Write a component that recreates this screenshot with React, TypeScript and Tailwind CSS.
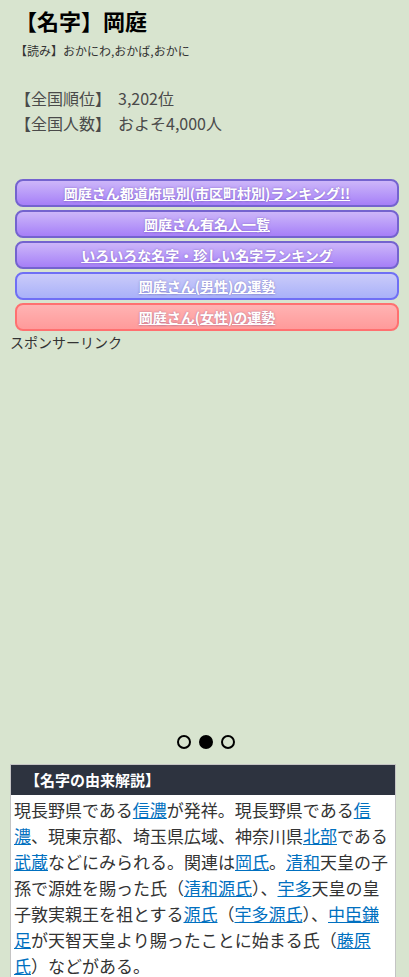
const font = "font-['Noto_Sans_CJK_JP','Noto_Sans',sans-serif]";

type Btn = { label: string; tone: "purple" | "blue" | "red" };

const buttons: Btn[] = [
  { label: "岡庭さん都道府県別(市区町村別)ランキング!!", tone: "purple" },
  { label: "岡庭さん有名人一覧", tone: "purple" },
  { label: "いろいろな名字・珍しい名字ランキング", tone: "purple" },
  { label: "岡庭さん(男性)の運勢", tone: "blue" },
  { label: "岡庭さん(女性)の運勢", tone: "red" },
];

const toneClass = {
  purple: "bg-gradient-to-b from-[#cdb6f9] to-[#a67ff7] border-[#7463cf]",
  blue: "bg-gradient-to-b from-[#cbcbf9] to-[#a9b1f9] border-[#6f6ff5]",
  red: "bg-gradient-to-b from-[#ffb3b3] to-[#ff9a9a] border-[#ff7070]",
};

function L({ children }: { children: string }) {
  return <a href="#" className="text-[#0070c0] underline">{children}</a>;
}

export default function App() {
  return (
    <div className={`min-h-[977px] w-[409px] bg-[#d8e4cf] text-[#333] ${font}`}>
      {/* header */}
      <div className="px-[15px] pt-[6px]">
        <h1 className="text-[22px] font-bold leading-[28px] text-black">【名字】岡庭</h1>
        <p className="mt-[9px] text-[12px] leading-[16px] text-[#333]">【読み】おかにわ,おかば,おかに</p>
        <div className="mt-[27px] text-[16px] leading-[25px] text-[#4a4a4a]">
          <div className="flex">
            <span className="w-[103px]">【全国順位】</span>
            <span>3,202位</span>
          </div>
          <div className="flex">
            <span className="w-[103px]">【全国人数】</span>
            <span>およそ4,000人</span>
          </div>
        </div>
      </div>

      {/* link buttons */}
      <div className="mt-[43px] flex flex-col gap-[3px] pl-[15px] pr-[10px]">
        {buttons.map((b) => (
          <a
            key={b.label}
            href="#"
            className={`flex h-[28px] items-center justify-center rounded-[8px] border-2 text-[14px] font-bold text-white underline [text-shadow:0_0_2px_rgba(60,40,120,0.45)] ${toneClass[b.tone]}`}
          >
            {b.label}
          </a>
        ))}
      </div>
      <p className="pl-[10px] pt-[1px] text-[14px] leading-[20px] text-[#333]">スポンサーリンク</p>

      {/* ad space */}
      <div className="h-[383px]" />

      {/* carousel dots */}
      <div className="flex justify-center gap-[8px] pl-[2px]">
        <span className="h-[14px] w-[14px] rounded-full border-2 border-black" />
        <span className="h-[14px] w-[14px] rounded-full border-2 border-black bg-black" />
        <span className="h-[14px] w-[14px] rounded-full border-2 border-black" />
      </div>

      {/* origin box */}
      <div className="ml-[10px] mt-[15px] w-[386px] border border-[#c4c4c4] bg-white">
        <div className="flex h-[30px] items-center bg-[#2d333f] pl-[14px] text-[15px] font-bold text-white">
          【名字の由来解説】
        </div>
        <p className="px-[3px] pt-[2px] text-[17px] leading-[26px] text-[#333]">
          現長野県である<L>信濃</L>が発祥。現長野県である<L>信濃</L>、現東京都、埼玉県広域、神奈川県<L>北部</L>である<L>武蔵</L>などにみられる。関連は<L>岡氏</L>。<L>清和</L>天皇の子孫で源姓を賜った氏（<L>清和源氏</L>）、<L>宇多</L>天皇の皇子敦実親王を祖とする<L>源氏</L>（<L>宇多源氏</L>）、<L>中臣鎌足</L>が天智天皇より賜ったことに始まる氏（<L>藤原氏</L>）などがある。
        </p>
      </div>
    </div>
  );
}
